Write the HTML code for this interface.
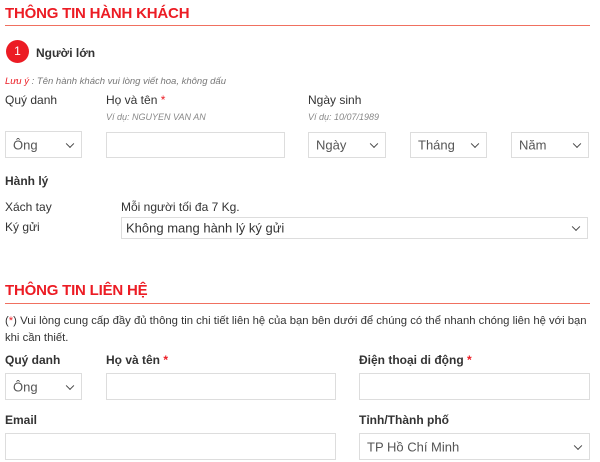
<!DOCTYPE html>
<html><head><meta charset="utf-8"><style>
body{margin:0;width:600px;height:462px;background:#fff;font-family:"Liberation Sans",sans-serif;color:#333;position:relative;overflow:hidden}
.a{position:absolute;white-space:nowrap}
.t{font-size:15px;font-weight:bold;color:#ec1c24;letter-spacing:-0.2px}
.ln{position:absolute;left:5px;width:585px;height:1px;background:#f07060}
.box{position:absolute;border:1px solid #ddd;box-sizing:border-box;background:#fff;font-size:13px;color:#555}
.box span{position:absolute;left:7px;top:50%;transform:translateY(-50%)}
.box i{position:absolute;right:8px;top:50%;width:5px;height:5px;border-right:1.3px solid #444;border-bottom:1.3px solid #444;transform:translateY(-70%) rotate(45deg)}
.l{font-size:12px;color:#333}
.b{font-weight:bold}
.h{font-size:9px;color:#888;font-style:italic}
.r{color:#ec1c24}
</style></head><body>
<div class="a t" style="left:5px;top:5px">THÔNG TIN HÀNH KHÁCH</div>
<div class="ln" style="top:25px"></div>
<div class="a" style="left:6px;top:40px;width:23px;height:23px;border-radius:50%;background:#ec1c24;color:#fff;font-size:12px;text-align:center;line-height:23px">1</div>
<div class="a l b" style="left:36px;top:46px">Người lớn</div>
<div class="a" style="left:5px;top:76px;font-size:9.5px;font-style:italic;color:#777"><span class="r">Lưu ý</span> : Tên hành khách vui lòng viết hoa, không dấu</div>
<div class="a l" style="left:5px;top:93px">Quý danh</div>
<div class="a l" style="left:106px;top:93px">Họ và tên <span class="r">*</span></div>
<div class="a l" style="left:308px;top:93px">Ngày sinh</div>
<div class="a h" style="left:106px;top:112px">Ví dụ: NGUYEN VAN AN</div>
<div class="a h" style="left:308px;top:112px">Ví dụ: 10/07/1989</div>
<div class="box" style="left:5px;top:131px;width:77px;height:27px"><span>Ông</span><i></i></div>
<div class="box" style="left:106px;top:132px;width:179px;height:26px"></div>
<div class="box" style="left:308px;top:132px;width:78px;height:26px"><span>Ngày</span><i></i></div>
<div class="box" style="left:410px;top:132px;width:77px;height:26px"><span>Tháng</span><i></i></div>
<div class="box" style="left:511px;top:132px;width:78px;height:26px"><span>Năm</span><i></i></div>
<div class="a l b" style="left:5px;top:174px">Hành lý</div>
<div class="a l" style="left:5px;top:200px">Xách tay</div>
<div class="a l" style="left:121px;top:200px">Mỗi người tối đa 7 Kg.</div>
<div class="a l" style="left:5px;top:220px">Ký gửi</div>
<div class="box" style="left:121px;top:217px;width:467px;height:22px"><span style="left:4px;color:#333">Không mang hành lý ký gửi</span><i></i></div>
<div class="a t" style="left:5px;top:282px">THÔNG TIN LIÊN HỆ</div>
<div class="ln" style="top:303px"></div>
<div class="a l" style="left:5px;top:315px;font-size:11.3px">(<span class="r">*</span>) Vui lòng cung cấp đầy đủ thông tin chi tiết liên hệ của bạn bên dưới để chúng có thể nhanh chóng liên hệ với bạn</div>
<div class="a l" style="left:5px;top:332px;font-size:11.3px">khi cần thiết.</div>
<div class="a l b" style="left:5px;top:353px">Quý danh</div>
<div class="a l b" style="left:106px;top:353px">Họ và tên <span class="r">*</span></div>
<div class="a l b" style="left:359px;top:353px">Điện thoại di động <span class="r">*</span></div>
<div class="box" style="left:5px;top:373px;width:77px;height:27px"><span>Ông</span><i></i></div>
<div class="box" style="left:106px;top:373px;width:230px;height:27px"></div>
<div class="box" style="left:359px;top:373px;width:231px;height:27px"></div>
<div class="a l b" style="left:5px;top:413px">Email</div>
<div class="a l b" style="left:359px;top:413px">Tỉnh/Thành phố</div>
<div class="box" style="left:5px;top:433px;width:331px;height:27px"></div>
<div class="box" style="left:359px;top:433px;width:231px;height:27px"><span>TP Hồ Chí Minh</span><i></i></div>
</body></html>
